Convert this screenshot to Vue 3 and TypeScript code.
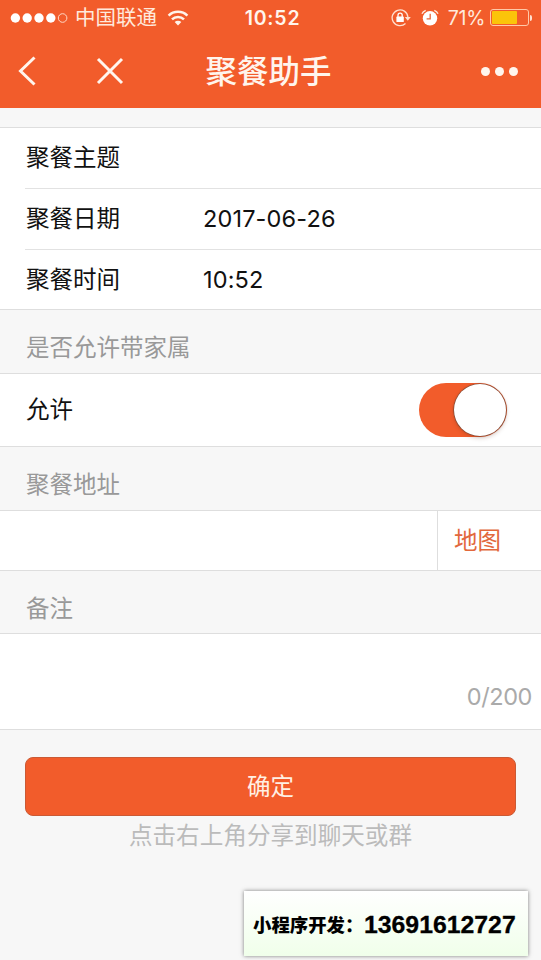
<script setup lang="ts">
import { ref } from 'vue'

interface Field {
  label: string
  value: string
}

const fields: Field[] = [
  { label: '聚餐主题', value: '' },
  { label: '聚餐日期', value: '2017-06-26' },
  { label: '聚餐时间', value: '10:52' },
]
const allowFamily = ref(true)
const remark = ref('')
const battery = 71
</script>

<template>
  <div class="page">
    <header class="header">
      <div class="status">
        <div class="status-left">
          <svg class="signal" width="58" height="12" viewBox="0 0 58 12">
            <g fill="#fff">
              <circle cx="5.4" cy="6" r="4.7" />
              <circle cx="17.2" cy="6" r="4.7" />
              <circle cx="29" cy="6" r="4.7" />
              <circle cx="40.8" cy="6" r="4.7" />
            </g>
            <circle cx="52.6" cy="6" r="4.3" fill="none" stroke="#ffd9c6" stroke-width="1" />
          </svg>
          <span class="carrier">中国联通</span>
          <svg class="wifi" width="22" height="16" viewBox="0 0 22 16">
            <g fill="none" stroke="#fff3ea" stroke-width="2.5">
              <path d="M1.6 5.7a13.4 13.4 0 0 1 18.8 0" />
              <path d="M5 9.4a8.5 8.5 0 0 1 12 0" />
            </g>
            <path d="M11 15.6l-3.3-3.5a4.7 4.7 0 0 1 6.6 0z" fill="#fff3ea" />
          </svg>
        </div>
        <span class="clock">10:52</span>
        <div class="status-right">
          <svg class="lock" width="20" height="18" viewBox="0 0 20 18">
            <path d="M14.5 14.5A7.9 7.9 0 1 1 16.9 8" fill="none" stroke="#ffe0d0" stroke-width="1.3" />
            <path d="M13.8 8h6l-3 3.7z" fill="#ffe0d0" />
            <rect x="5.4" y="7.6" width="7.4" height="5.4" rx=".6" fill="#fff" />
            <path d="M7 8.2V6.2a2.1 2.1 0 0 1 4.2 0v2" fill="none" stroke="#fff" stroke-width="1.3" />
          </svg>
          <svg class="alarm" width="18" height="18" viewBox="0 0 18 18">
            <circle cx="9" cy="9.3" r="7.2" fill="#fff" />
            <path d="M1 4.8Q2 2.4 4.7 1.4M17 4.8Q16 2.4 13.3 1.4" stroke="#ffe9dc" stroke-width="1.4" fill="none" />
            <path d="M9.2 4.8v5H5.6" stroke="#e8693c" stroke-width="1.3" fill="none" />
          </svg>
          <span class="percent">{{ battery }}%</span>
          <span class="battery"><span class="charge" :style="{ width: battery + '%' }"></span></span>
          <span class="battery-tip"></span>
        </div>
      </div>
      <nav class="nav">
        <div class="nav-left">
          <svg width="18" height="30" viewBox="0 0 18 30">
            <path d="M16.5 1.5L2.5 15l14 13.5" fill="none" stroke="#fff5ed" stroke-width="3" />
          </svg>
          <svg class="close" width="28" height="28" viewBox="0 0 28 28">
            <path d="M2 2l24 24M26 2L2 26" fill="none" stroke="#fff5ed" stroke-width="3" />
          </svg>
        </div>
        <h1 class="title">聚餐助手</h1>
        <div class="nav-right">
          <i class="dot"></i><i class="dot"></i><i class="dot"></i>
        </div>
      </nav>
    </header>

    <main class="form">
      <section class="cells fields">
        <div v-for="field in fields" :key="field.label" class="field">
          <span class="label">{{ field.label }}</span>
          <span class="value">{{ field.value }}</span>
        </div>
      </section>

      <h2 class="group-title">是否允许带家属</h2>
      <section class="cells allow">
        <span class="allow-label">允许</span>
        <button class="switch" :class="{ on: allowFamily }" @click="allowFamily = !allowFamily">
          <span class="knob"></span>
        </button>
      </section>

      <h2 class="group-title">聚餐地址</h2>
      <section class="cells address">
        <div class="address-input"></div>
        <div class="map">地图</div>
      </section>

      <h2 class="group-title remark-title">备注</h2>
      <section class="cells remark">
        <span class="counter">{{ remark.length }}/200</span>
      </section>

      <button class="submit">确定</button>
      <p class="hint">点击右上角分享到聊天或群</p>
    </main>

    <aside class="banner">
      <span class="banner-text">小程序开发：</span>
      <span class="phone">13691612727</span>
    </aside>
  </div>
</template>

<style>
body {
  background: #f7f7f7;
}
</style>

<style scoped>
.page {
  position: relative;
  box-sizing: border-box;
  width: 541px;
  height: 960px;
  overflow: hidden;
  background: #f7f7f7;
  color: #111;
  font-family: Inter, 'Noto Sans CJK SC', sans-serif;
  font-size: 23.5px;
  font-weight: 400;
}
.page *,
.page *::before {
  box-sizing: border-box;
}
.header {
  height: 108px;
  background: #f25c2b;
  color: #fff5ed;
}
.status {
  display: grid;
  grid-template-columns: 1fr auto 1fr;
  align-items: center;
  height: 35px;
  padding: 0 9px 0 10px;
}
.status-left,
.status-right {
  display: flex;
  align-items: center;
}
.status-right {
  justify-content: flex-end;
}
.carrier {
  margin-left: 7px;
  font-size: 20.5px;
  line-height: 34px;
  color: #ffe9dc;
}
.wifi {
  margin-left: 10px;
}
.clock {
  margin-left: 3px;
  font-size: 19.5px;
  font-weight: 600;
  letter-spacing: 0.8px;
}
.alarm {
  margin-left: 10px;
}
.percent {
  margin-left: 9px;
  font-size: 19.5px;
  letter-spacing: -0.3px;
  color: #ffe9dc;
}
.battery {
  width: 39px;
  height: 17px;
  margin-left: 5px;
  padding: 1px;
  border: 1px solid #ffc9a8;
  border-radius: 3px;
}
.charge {
  display: block;
  height: 100%;
  border-radius: 1px;
  background: #fbc40a;
}
.battery-tip {
  width: 2px;
  height: 6px;
  margin-left: 1px;
  border-radius: 0 2px 2px 0;
  background: #ffe0d0;
}
.nav {
  display: grid;
  grid-template-columns: 1fr auto 1fr;
  align-items: center;
  height: 73px;
  padding: 0 23px 1px 18px;
}
.nav-left {
  display: flex;
  align-items: center;
}
.close {
  margin-left: 60px;
}
.title {
  margin: 0;
  padding: 2px 0 0 1px;
  font-size: 31.5px;
  line-height: 44px;
  font-weight: 500;
}
.nav-right {
  display: flex;
  justify-content: flex-end;
  gap: 5px;
}
.dot {
  width: 9px;
  height: 9px;
  border-radius: 50%;
  background: #fff5ed;
}
.form {
  display: flex;
  flex-direction: column;
  padding-top: 19px;
}
.cells {
  background: #fff;
  border-top: 1px solid #dedede;
  border-bottom: 1px solid #dedede;
}
.fields {
  height: 183px;
  padding-left: 25px;
}
.field {
  display: flex;
  align-items: center;
  height: 61px;
  padding-bottom: 5px;
}
.field:first-child {
  height: 60px;
}
.field + .field {
  border-top: 1px solid #e2e2e2;
}
.label {
  width: 178px;
  padding-left: 1px;
}
.value {
  padding-top: 3px;
  letter-spacing: 0.15px;
}
.group-title {
  display: flex;
  align-items: flex-end;
  height: 63px;
  margin: 0;
  padding: 0 26px 8px;
  color: #999;
  font-size: 23.5px;
  line-height: 34px;
  font-weight: 400;
}
.allow {
  display: flex;
  align-items: center;
  justify-content: space-between;
  height: 74px;
  padding: 0 34px 0 26px;
}
.allow-label {
  padding-bottom: 4px;
}
.switch {
  display: flex;
  width: 88px;
  height: 54px;
  padding: 1px;
  border: 0;
  border-radius: 27px;
  background: #ddd;
}
.switch.on {
  justify-content: flex-end;
  background: #f25c2b;
}
.knob {
  width: 52px;
  height: 52px;
  border-radius: 50%;
  background: #fff;
  box-shadow: 0 0 1px 0.6px rgba(70, 60, 55, 0.75), 0 2px 4px rgba(90, 40, 20, 0.25);
}
.address {
  display: flex;
  height: 61px;
}
.address-input {
  flex: 1;
}
.map {
  display: flex;
  align-items: center;
  width: 104px;
  padding: 0 0 4px 16px;
  border-left: 1px solid #dedede;
  color: #e2683c;
}
.remark-title {
  height: 62px;
  padding-bottom: 7px;
}
.remark {
  display: flex;
  align-items: flex-end;
  justify-content: flex-end;
  height: 97px;
  padding: 0 9px 18px;
}
.counter {
  color: #aaa;
  line-height: 28px;
  letter-spacing: -0.4px;
}
.submit {
  height: 59px;
  margin: 27px 25px 0;
  padding: 0 0 3px;
  border: 1px solid #ca5a35;
  border-radius: 8px;
  background: #f25c2b;
  color: #fff0e4;
  font: inherit;
}
.hint {
  margin: 3px 0 0;
  color: #bbb;
  font-size: 23.6px;
  line-height: 34px;
  text-align: center;
}
.banner {
  position: absolute;
  left: 244px;
  top: 891px;
  display: flex;
  align-items: center;
  width: 284px;
  height: 65px;
  padding: 4px 0 0 9px;
  background: linear-gradient(#fff, #f0ffea);
  box-shadow: 0 0 4px rgba(0, 0, 0, 0.5);
  color: #000;
  font-weight: 700;
}
.banner-text {
  width: 111px;
  padding-bottom: 3px;
  white-space: nowrap;
  font-size: 18.4px;
  font-family: 'Noto Sans CJK SC', sans-serif;
  font-weight: 900;
}
.phone {
  padding-bottom: 1px;
  font-family: 'Liberation Sans', sans-serif;
  font-size: 24.8px;
  -webkit-text-stroke: 0.3px #000;
}
</style>
